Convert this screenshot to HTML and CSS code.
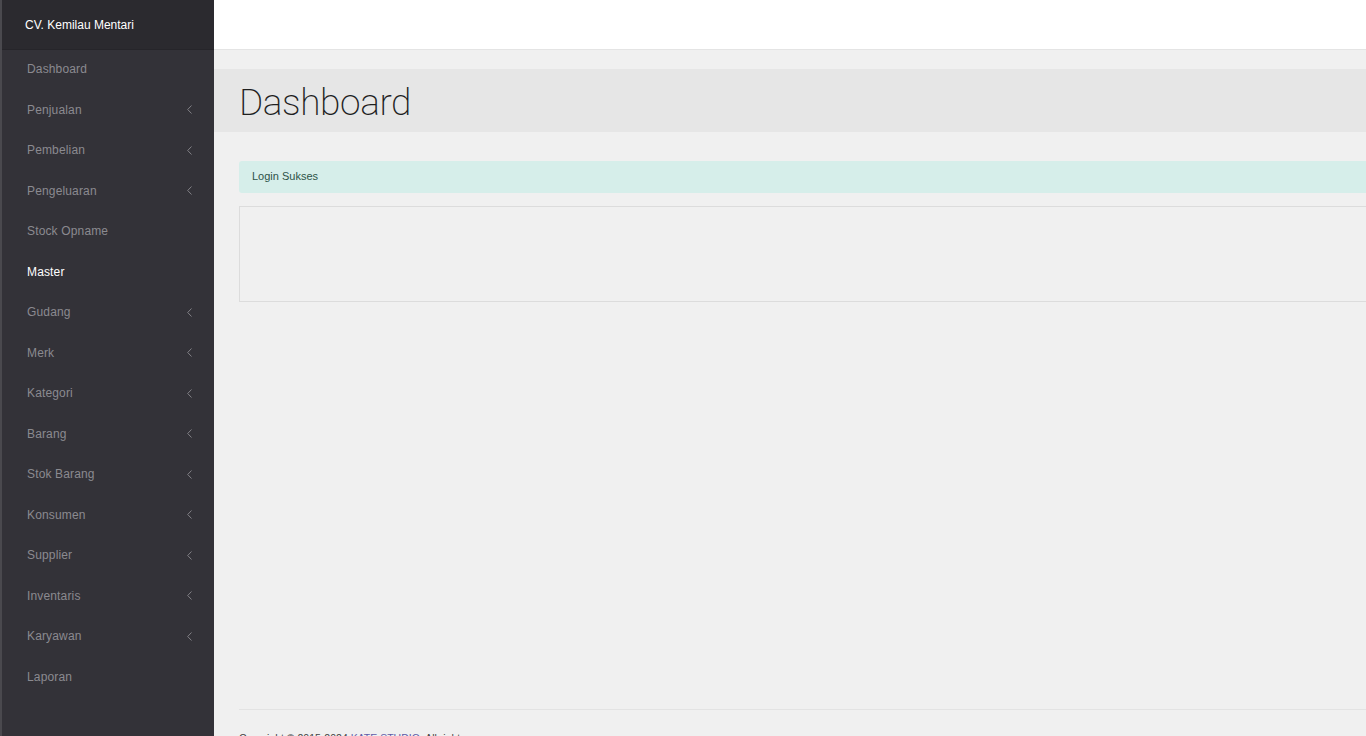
FILE: index.html
```html
<!DOCTYPE html>
<html lang="id">
<head>
<meta charset="utf-8">
<title>Dashboard - CV. Kemilau Mentari</title>
<link rel="stylesheet" href="styles.css">
</head>
<body>
<div class="app">
  <aside class="sidebar">
    <div class="brand">CV. Kemilau Mentari</div>
    <ul class="menu">
      <li class="item"><span>Dashboard</span></li>
      <li class="item"><span>Penjualan</span><svg class="chev" viewBox="0 0 5 9"><polyline points="4.5,0.5 0.7,4.5 4.5,8.5"/></svg></li>
      <li class="item"><span>Pembelian</span><svg class="chev" viewBox="0 0 5 9"><polyline points="4.5,0.5 0.7,4.5 4.5,8.5"/></svg></li>
      <li class="item"><span>Pengeluaran</span><svg class="chev" viewBox="0 0 5 9"><polyline points="4.5,0.5 0.7,4.5 4.5,8.5"/></svg></li>
      <li class="item"><span>Stock Opname</span></li>
      <li class="item active"><span>Master</span></li>
      <li class="item"><span>Gudang</span><svg class="chev" viewBox="0 0 5 9"><polyline points="4.5,0.5 0.7,4.5 4.5,8.5"/></svg></li>
      <li class="item"><span>Merk</span><svg class="chev" viewBox="0 0 5 9"><polyline points="4.5,0.5 0.7,4.5 4.5,8.5"/></svg></li>
      <li class="item"><span>Kategori</span><svg class="chev" viewBox="0 0 5 9"><polyline points="4.5,0.5 0.7,4.5 4.5,8.5"/></svg></li>
      <li class="item"><span>Barang</span><svg class="chev" viewBox="0 0 5 9"><polyline points="4.5,0.5 0.7,4.5 4.5,8.5"/></svg></li>
      <li class="item"><span>Stok Barang</span><svg class="chev" viewBox="0 0 5 9"><polyline points="4.5,0.5 0.7,4.5 4.5,8.5"/></svg></li>
      <li class="item"><span>Konsumen</span><svg class="chev" viewBox="0 0 5 9"><polyline points="4.5,0.5 0.7,4.5 4.5,8.5"/></svg></li>
      <li class="item"><span>Supplier</span><svg class="chev" viewBox="0 0 5 9"><polyline points="4.5,0.5 0.7,4.5 4.5,8.5"/></svg></li>
      <li class="item"><span>Inventaris</span><svg class="chev" viewBox="0 0 5 9"><polyline points="4.5,0.5 0.7,4.5 4.5,8.5"/></svg></li>
      <li class="item"><span>Karyawan</span><svg class="chev" viewBox="0 0 5 9"><polyline points="4.5,0.5 0.7,4.5 4.5,8.5"/></svg></li>
      <li class="item"><span>Laporan</span></li>
    </ul>
  </aside>
  <main class="main">
    <header class="topbar"></header>
    <section class="page-head">
      <h1 class="title">Dashboard</h1>
    </section>
    <section class="content">
      <div class="alert">Login Sukses</div>
      <div class="panel"></div>
    </section>
    <footer class="footer">
      Copyright © 2015-2024 <a class="footer-link" href="#">KATE STUDIO</a>. All rights
    </footer>
  </main>
</div>
</body>
</html>
```

FILE: styles.css
```css
html, body {
  margin: 0;
  padding: 0;
  height: 100%;
  overflow: hidden;
}
body {
  font-family: "Liberation Sans", Arial, sans-serif;
  background: #f0f0f0;
}
.app {
  display: flex;
  height: 736px;
}
.sidebar {
  width: 212px;
  flex: 0 0 212px;
  background: #333238;
  border-left: 2px solid #4a494e;
  display: flex;
  flex-direction: column;
}
.brand {
  height: 50px;
  box-sizing: border-box;
  background: #2b2a2f;
  border-bottom: 1px solid #26252a;
  color: #ffffff;
  font-size: 12px;
  line-height: 51px;
  padding-left: 23px;
}
.menu {
  list-style: none;
  margin: 0;
  padding: 0;
  margin-top: -1px;
}
.item {
  height: 40.53px;
  display: flex;
  align-items: center;
  justify-content: space-between;
  padding: 0 22px 0 25px;
  color: #8b8a90;
  font-size: 12px;
  letter-spacing: 0.15px;
}
.item.active {
  color: #ffffff;
}
.chev {
  width: 5px;
  height: 9px;
  fill: none;
  stroke: #8b8a90;
  stroke-width: 0.9;
}
.main {
  flex: 1 1 auto;
  min-width: 0;
  display: flex;
  flex-direction: column;
  background: #f0f0f0;
  margin-right: -20px;
}
.topbar {
  height: 50px;
  flex: 0 0 50px;
  background: #ffffff;
  border-bottom: 1px solid #e4e4e4;
  box-sizing: border-box;
}
.page-head {
  margin-top: 19px;
  height: 63px;
  box-sizing: border-box;
  padding-top: 3px;
  background: #e6e6e6;
  display: flex;
  align-items: center;
  padding-left: 25px;
}
.title {
  margin: 0;
  font-family: Roboto, "Liberation Sans", sans-serif;
  font-weight: 200;
  font-size: 37px;
  color: #1f1f1f;
  letter-spacing: -0.4px;
}
.content {
  padding: 29px 0 0 25px;
  flex: 1 1 auto;
}
.alert {
  height: 32px;
  box-sizing: border-box;
  background: #d6eeea;
  color: #2d5248;
  font-size: 11px;
  line-height: 31px;
  padding-left: 13px;
  border-radius: 3px 0 0 3px;
}
.panel {
  margin-top: 13px;
  height: 96px;
  box-sizing: border-box;
  border: 1px solid #dcdcdc;
  border-right: none;
}
.footer {
  margin-left: 25px;
  border-top: 1px solid #e3e3e3;
  height: 27px;
  box-sizing: border-box;
  padding-top: 21px;
  font-size: 10.5px;
  color: #444444;
  line-height: 14px;
  white-space: nowrap;
  overflow: hidden;
}
.footer-link {
  color: #605ca8;
  text-decoration: none;
}
```
